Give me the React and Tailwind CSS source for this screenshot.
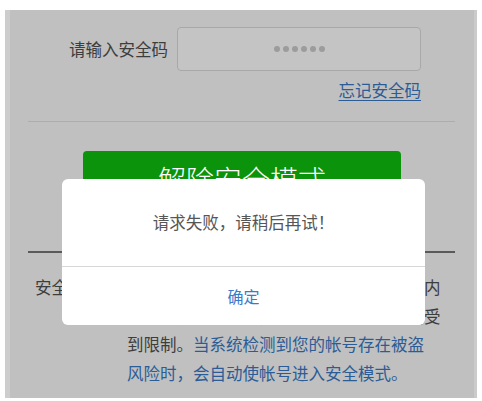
import React from 'react';

const font = { fontFamily: '"Noto Sans CJK SC", "Noto Sans", sans-serif' };

const Dots = () => (
  <div className="flex gap-[3px]">
    {[0, 1, 2, 3, 4, 5].map((i) => (
      <span key={i} className="block w-[6px] h-[6px] rounded-full bg-[#9c9c9c]" />
    ))}
  </div>
);

const App = () => {
  return (
    <div className="w-full h-[401px] bg-white px-[5px] pt-[10px] pb-[3px]" style={font}>
      <div className="relative h-full bg-[#c0c0c0] border-l-[5px] border-l-[#cdcdcd] border-r-[3px] border-r-[#cbcbcb] overflow-hidden">
        <div className="flex items-center pt-[17px]">
          <div className="w-[158px] text-right text-[16.5px] leading-[24px] text-[#3d3d3d]">请输入安全码</div>
          <div className="ml-[9px] w-[244px] h-[44px] rounded-[4px] border border-[#a8a8a8] bg-[#c4c4c4] flex items-center justify-center">
            <Dots />
          </div>
        </div>
        <div className="pr-[53px] mt-[7px] flex justify-end">
          <span className="text-[16.5px] leading-[24px] text-[#2b5c96] underline underline-offset-[3px]">忘记安全码</span>
        </div>
        <div className="mx-[18px] mr-[19px] mt-[19px] h-px bg-[#adadad]" />
        <div className="ml-[73px] w-[318px] h-[56px] mt-[29px] rounded-[4px] bg-[#0b930b] flex items-center justify-center">
          <span className="text-[28px] leading-none text-white font-light">解除安全模式</span>
        </div>
        <div className="mx-[18px] mr-[19px] mt-[44px] h-[2px] bg-[#5a5a5a]" />
        <div className="flex mt-[20px] ml-[25px] text-[16.5px] leading-[28.5px] text-[#3d3d3d]">
          <div className="w-[92px] shrink-0">安全模式：</div>
          <div className="w-[320px]">
            <div className="whitespace-nowrap">开启安全模式后，您的帐号在一定的时间内</div>
            <div className="whitespace-nowrap">无法使用部分功能，如支付、转账等将会受</div>
            <div className="whitespace-nowrap">
              到限制。<span className="text-[#2b5c96]">当系统检测到您的帐号存在被盗</span>
            </div>
            <div className="whitespace-nowrap text-[#2b5c96]">风险时，会自动使帐号进入安全模式。</div>
          </div>
        </div>

        <div className="absolute left-[52px] top-[169px] w-[363px] h-[146px] bg-white rounded-[6px] flex flex-col overflow-hidden">
          <div className="h-[87px] flex items-center justify-center text-[16.5px] text-[#565656]">请求失败，请稍后再试！</div>
          <div className="h-px bg-[#d6d6d6]" />
          <div className="flex-1 flex items-center justify-center text-[16px] text-[#3b7acb]">确定</div>
        </div>
      </div>
    </div>
  );
};

export default App;
